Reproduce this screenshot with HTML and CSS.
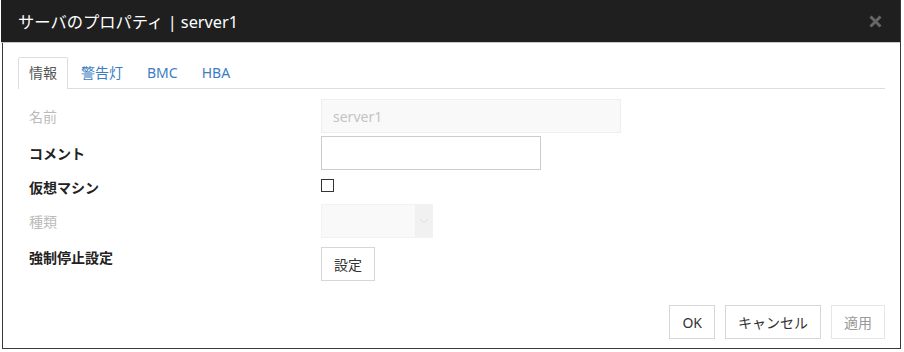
FILE: index.html
```html
<!DOCTYPE html>
<html lang="ja">
<head>
    <meta charset="UTF-8">
    <title>サーバのプロパティ</title>
    <link rel="stylesheet" href="styles.css">
</head>
<body>

<div class="dialog">
    <!-- ヘッダー -->
    <div class="dialog-header">
        <span class="dialog-title">サーバのプロパティ | server1</span>
        <span class="close-btn">
            <svg width="13" height="13" viewBox="0 0 13 13"><path d="M1.5 1.5l10 10M11.5 1.5l-10 10" stroke="#666" stroke-width="3"/></svg>
        </span>
    </div>

    <div class="dialog-body">
        <ul class="tabs">
            <li class="tab active">情報</li>
            <li class="tab">警告灯</li>
            <li class="tab">BMC</li>
            <li class="tab">HBA</li>
        </ul>

        <div class="form">
            <div class="row row-name">
                <label class="label disabled">名前</label>
                <input type="text" class="input input-wide" value="server1" disabled>
            </div>
            <div class="row">
                <label class="label">コメント</label>
                <input type="text" class="input input-mid">
            </div>
            <div class="row">
                <label class="label">仮想マシン</label>
                <input type="checkbox" class="check">
            </div>
            <div class="row row-kind">
                <label class="label disabled">種類</label>
                <div class="select">
                    <span class="select-arrow">
                        <svg width="10" height="6" viewBox="0 0 10 6"><path d="M1 1l4 4 4-4" fill="none" stroke="#ddd" stroke-width="1"/></svg>
                    </span>
                </div>
            </div>
            <div class="row row-top">
                <label class="label">強制停止設定</label>
                <button class="btn">設定</button>
            </div>
        </div>

        <div class="footer">
            <button class="btn">OK</button>
            <button class="btn">キャンセル</button>
            <button class="btn btn-disabled">適用</button>
        </div>
    </div>
</div>

</body>
</html>
```

FILE: styles.css
```css
body {
    margin: 0;
    padding: 0;
    background: #fff;
    font-family: "Noto Sans", "Noto Sans CJK JP", sans-serif;
    font-size: 14px;
    color: #333;
}
.dialog {
    margin-left: 2px;
    width: 897px;
    height: 348px;
    border: 1px solid #3a3a3a;
    border-top: none;
    display: flex;
    flex-direction: column;
}
.dialog-header {
    height: 42px;
    background: #1f1f1f;
    border-bottom: 1px solid #c8c8c8;
    display: flex;
    align-items: center;
    justify-content: space-between;
    margin-left: -2px;
    padding: 0 18px 0 17px;
}
.dialog-title {
    color: #fff;
    font-size: 16.3px;
}
.close-btn {
    display: flex;
}
.dialog-body {
    padding: 14px 15px 0 15px;
    flex: 1;
    display: flex;
    flex-direction: column;
}
.tabs {
    list-style: none;
    margin: 0;
    padding: 0;
    display: flex;
    border-bottom: 1px solid #ddd;
    height: 31px;
}
.tab {
    padding: 0 10px;
    margin-right: 2px;
    line-height: 30px;
    color: #3b7dc3;
    border: 1px solid transparent;
    border-bottom: none;
}
.tab.active {
    color: #555;
    border-color: #ddd;
    border-radius: 2px 2px 0 0;
    background: #fff;
    height: 31px;
}
.form {
    margin-top: 10px;
}
.row {
    display: flex;
    align-items: center;
    height: 34px;
}
.row-name {
    margin-bottom: 3px;
}
.row-kind {
    margin-bottom: 9px;
}
.row-top {
    align-items: flex-start;
}
.label {
    width: 303px;
    padding-left: 11px;
    box-sizing: border-box;
    font-weight: bold;
    color: #222;
}
.label.disabled {
    font-weight: normal;
    color: #bbb;
}
.input {
    height: 34px;
    box-sizing: border-box;
    border: 1px solid #ccc;
    padding: 0 11px;
    font-family: inherit;
    font-size: 14px;
    background: #fff;
}
.input:disabled {
    background: #f9f9f9;
    border-color: #eee;
    color: #c4c4c4;
}
.input-wide {
    width: 300px;
}
.input-mid {
    width: 220px;
}
.check {
    appearance: none;
    margin: 0 0 4px 0;
    width: 13px;
    height: 13px;
    border: 1px solid #333;
    background: #fff;
}
.select {
    width: 112px;
    height: 34px;
    box-sizing: border-box;
    background: #f9f9f9;
    border: 1px solid #f2f2f2;
    display: flex;
    justify-content: flex-end;
}
.select-arrow {
    width: 17px;
    background: #f1f1f1;
    display: flex;
    align-items: center;
    justify-content: center;
}
.btn {
    height: 34px;
    padding: 0 12px;
    background: #fff;
    border: 1px solid #d6d6d6;
    font-family: inherit;
    font-size: 14px;
    color: #333;
}
.btn-disabled {
    color: #999;
    border-color: #e6e6e6;
}
.footer {
    margin-top: 24px;
    display: flex;
    justify-content: flex-end;
    gap: 10px;
}
```
